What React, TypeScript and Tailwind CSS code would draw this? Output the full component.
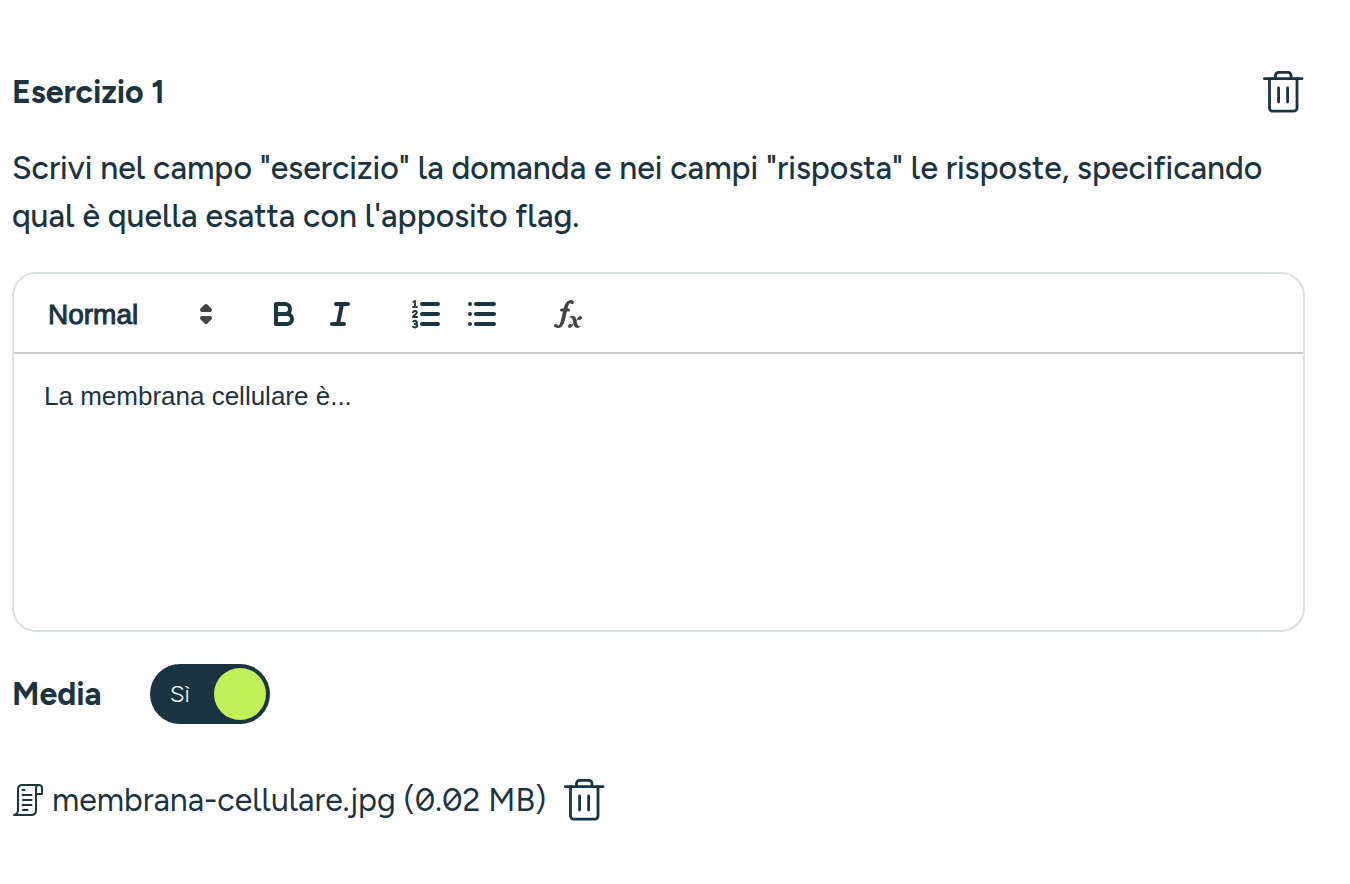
import { useState } from "react";

const FORMATS = ["Normal", "Heading 1", "Heading 2"];

function TrashIcon() {
  return (
    <svg
      viewBox="0 0 42 44"
      className="h-11 w-[42px]"
      fill="none"
      stroke="currentColor"
      strokeWidth="2.8"
      strokeLinecap="round"
      strokeLinejoin="round"
    >
      <path d="M1.400 8.700H39" />
      <path d="M12.500 8.700V5.300A3 3 0 0 1 15.500 2.300H25A3 3 0 0 1 28 5.300V8.700" />
      <path d="M6.500 8.700V38A3.200 3.200 0 0 0 9.700 41.200H30.800A3.200 3.200 0 0 0 34 38V8.700" />
      <path d="M15.600 18V32M24.600 18V32" />
    </svg>
  );
}

function ScrollIcon() {
  return (
    <svg
      viewBox="0 0 32 34"
      className="h-[34px] w-8 shrink-0"
      fill="none"
      stroke="currentColor"
      strokeWidth="2"
      strokeLinecap="round"
      strokeLinejoin="round"
    >
      <path d="M2 32C4.500 31.500 6 29.500 6 27V6.500C6 4 7.500 2 10 2H26.500C28.500 2 30 3 30 5V11H24V27C24 30 22 32 19 32H2" />
      <path d="M24 11V5C24 3 25 2 26.500 2" />
      <path d="M10.500 7H12.500M10.500 12H19.500M11 17H19.500M10.500 22H19.500M11 27H15.500" />
    </svg>
  );
}

function BoldIcon() {
  return (
    <svg viewBox="0 0 18 18" className="size-9" fill="none" stroke="currentColor" strokeWidth="2" strokeLinejoin="round">
      <path d="M5 4H9.500A2.500 2.500 0 0 1 9.500 9H5Z" />
      <path d="M5 9H10.500A2.500 2.500 0 0 1 10.500 14H5Z" />
    </svg>
  );
}

function ItalicIcon() {
  return (
    <svg viewBox="0 0 18 18" className="size-9" fill="none" stroke="currentColor" strokeWidth="2" strokeLinecap="round">
      <path d="M7 4H13M5 14H11M8 14L10 4" />
    </svg>
  );
}

function OrderedListIcon() {
  return (
    <svg viewBox="0 0 18 18" className="size-9" fill="none" stroke="currentColor" strokeLinecap="round" strokeLinejoin="round">
      <path strokeWidth="2" d="M7 4H15M7 9H15M7 14H15" />
      <path stroke="#444444" strokeWidth="1" d="M2.500 5.500H4.500M3.500 5.200V2.500L2.700 2.900" />
      <path strokeWidth="1" d="M2.500 8.200C2.700 7.200 4.400 7.200 4.400 8.300C4.400 9.100 2.700 9.800 2.500 10.500H4.500" />
      <path strokeWidth="1" d="M2.600 12.700C3.200 12.200 4.400 12.400 4.400 13.200C4.400 13.800 3.900 14 3.400 14C4 14 4.600 14.200 4.600 14.900C4.600 15.800 3.200 15.900 2.500 15.400" />
    </svg>
  );
}

function BulletListIcon() {
  return (
    <svg viewBox="0 0 18 18" className="size-9" fill="none" stroke="currentColor" strokeWidth="2" strokeLinecap="round">
      <path d="M6 4H15M6 9H15M6 14H15M3 4H3M3 9H3M3 14H3" />
    </svg>
  );
}

function FormulaIcon() {
  return (
    <svg viewBox="0 0 18 18" className="size-9 text-[#444444]" fill="currentColor">
      <path d="M11.759 2.482a2.561 2.561 0 0 0-3.530.607A7.656 7.656 0 0 0 6.800 6.200C6.109 9.188 5.275 14.677 4.150 14.927a1.545 1.545 0 0 0-1.300-.933A.922.922 0 0 0 2 15.036S1.954 16 4.119 16s3.091-2.691 3.700-5.553c.177-.826.360-1.726.554-2.600L8.775 6.200c.381-1.421.807-2.521 1.306-2.676a1.014 1.014 0 0 0 1.020.56A.966.966 0 0 0 11.759 2.482Z" />
      <rect x="5" y="6.200" width="5" height="1.600" rx=".8" />
      <path d="M13.663 12.027a1.662 1.662 0 0 1 .266-.276q.193.069.456.138a2.100 2.100 0 0 0 .535.069 1.075 1.075 0 0 0 .767-.300 1.044 1.044 0 0 0 .314-.800.840.840 0 0 0-.238-.619.800.800 0 0 0-.594-.239 1.154 1.154 0 0 0-.781.300 4.607 4.607 0 0 0-.781 1q-.091.150-.218.346l-.246.380c-.068-.288-.137-.582-.212-.885-.459-1.847-2.494-.984-2.941-.800-.482.200-.353.647-.094.529a.869.869 0 0 1 1.281.585c.217.751.377 1.436.527 2.038a5.688 5.688 0 0 1-.362.467 2.690 2.690 0 0 1-.264.271q-.221-.080-.471-.147a2.029 2.029 0 0 0-.522-.066 1.079 1.079 0 0 0-.768.300A1.058 1.058 0 0 0 9 15.131a.820.820 0 0 0 .832.852 1.134 1.134 0 0 0 .787-.300 5.110 5.110 0 0 0 .776-.993q.141-.219.215-.340c.046-.076.122-.194.223-.346a2.786 2.786 0 0 0 .918 1.726 2.582 2.582 0 0 0 2.376-.185c.317-.181.212-.565 0-.494A.807.807 0 0 1 14.176 15a5.159 5.159 0 0 1-.913-2.446Q13.490 12.200 13.663 12.027Z" />
    </svg>
  );
}

const TOOL_GROUPS = [
  [
    { label: "Grassetto", Icon: BoldIcon },
    { label: "Corsivo", Icon: ItalicIcon },
  ],
  [
    { label: "Elenco numerato", Icon: OrderedListIcon },
    { label: "Elenco puntato", Icon: BulletListIcon },
  ],
  [{ label: "Formula", Icon: FormulaIcon }],
];

function Toolbar() {
  const [format, setFormat] = useState(FORMATS[0]);

  return (
    <div className="flex flex-wrap items-center gap-y-2 border-b-2 border-[#cccccc] px-4 pt-4 pb-3.5">
      <div className="relative mr-[30px] w-[196px]">
        <select
          aria-label="Formato"
          value={format}
          onChange={(e) => setFormat(e.target.value)}
          className="h-12 w-full appearance-none bg-transparent pt-0.5 pl-[18px] font-['Liberation_Sans',sans-serif] text-[28px] font-medium [-webkit-text-stroke:1px_#1b3442]"
        >
          {FORMATS.map((name) => (
            <option key={name}>{name}</option>
          ))}
        </select>
        <svg
          viewBox="0 0 18 18"
          className="pointer-events-none absolute top-1.5 right-0.5 size-9 fill-[#444444] stroke-[#444444]"
          strokeWidth="2"
          strokeLinejoin="round"
        >
          <path d="M7 11L9 13L11 11ZM7 7L9 5L11 7Z" />
        </svg>
      </div>
      {TOOL_GROUPS.map((group) => (
        <div key={group[0].label} className="mr-[30px] flex">
          {group.map(({ label, Icon }) => (
            <button key={label} type="button" aria-label={label} className="px-2.5 py-1.5">
              <Icon />
            </button>
          ))}
        </div>
      ))}
    </div>
  );
}

export default function App() {
  const [text, setText] = useState("La membrana cellulare è...");
  const [media, setMedia] = useState(true);

  // ss02 turns on Figtree's tailed l and slashed zero
  return (
    <main className="min-h-screen bg-white pt-[70px] pr-[45px] pl-3 font-[Figtree,Inter,sans-serif] text-[#1b3442] [font-feature-settings:'ss02']">
      <div className="flex items-center justify-between">
        <h2 className="text-[32px] leading-[44px] font-bold">Esercizio 1</h2>
        <button type="button" aria-label="Elimina esercizio">
          <TrashIcon />
        </button>
      </div>

      <p className="mt-[30px] text-[32px] leading-[48px] font-medium">
        Scrivi nel campo "esercizio" la domanda e nei campi "risposta" le risposte, specificando qual è quella esatta
        con l'apposito flag.
      </p>

      <div className="mt-8 overflow-hidden rounded-3xl border-2 border-[#dce1e1]">
        <Toolbar />
        <textarea
          aria-label="Esercizio"
          value={text}
          onChange={(e) => setText(e.target.value)}
          className="block h-[276px] w-full resize-none px-[30px] py-6 font-['Liberation_Sans',sans-serif] text-[26px] leading-9 outline-none"
        />
      </div>

      <div className="mt-8 flex items-center gap-12">
        <label htmlFor="media" className="text-[32px] leading-[44px] font-bold">
          Media
        </label>
        <label className="relative flex h-[60px] w-[120px] cursor-pointer items-center rounded-full bg-[#1b3442] p-1">
          <input
            id="media"
            type="checkbox"
            role="switch"
            checked={media}
            onChange={(e) => setMedia(e.target.checked)}
            className="peer sr-only"
          />
          <span className="w-[60px] pl-4 text-2xl font-light text-white">{media ? "Sì" : "No"}</span>
          <span className="size-[52px] rounded-full bg-[#c1f05a]" />
        </label>
      </div>

      <div className="mt-[54px] flex items-center">
        <ScrollIcon />
        <span className="mr-[18px] ml-2 text-[32px] leading-[44px]">membrana-cellulare.jpg (0.02 MB)</span>
        <button type="button" aria-label="Elimina file">
          <TrashIcon />
        </button>
      </div>
    </main>
  );
}
